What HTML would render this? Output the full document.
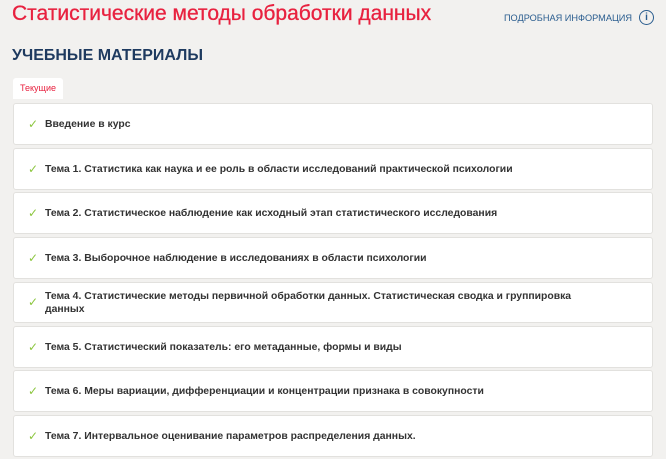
<!DOCTYPE html><html><head><meta charset="utf-8"><style>
body{margin:0;background:#f2f1ef;font-family:"Liberation Sans","DejaVu Sans",sans-serif;width:666px;height:459px;overflow:hidden;position:relative}
h1{position:absolute;left:12px;top:2px;margin:0;font-size:21px;font-weight:normal;color:#e8213f;-webkit-text-stroke:0.3px #e8213f}
.info{position:absolute;right:12px;top:10px;font-size:9.2px;color:#2a5d8f;display:flex;align-items:center;gap:7px}
.info span.i{width:13px;height:13px;border:1.6px solid #2a5d8f;border-radius:50%;display:inline-flex;align-items:center;justify-content:center;font-weight:bold;font-size:10px}
h2{position:absolute;left:12px;top:47px;margin:0;font-size:16px;font-weight:bold;color:#1e3a5f}
.tab{position:absolute;left:13px;top:78px;width:50px;height:21px;background:#fff;border-radius:3px 3px 0 0;font-size:9px;color:#e8213f;line-height:21px;text-align:center}
.card{position:absolute;left:13px;width:640px;background:#fff;border:1px solid #e2e1de;border-radius:3px;box-sizing:border-box;display:flex;align-items:center;font-size:10.4px;font-weight:bold;color:#333;line-height:13px}
.card .c{width:17px;padding-left:14px;color:#8cc63f;font-size:12px;flex:none}
</style></head><body>
<h1>Статистические методы обработки данных</h1>
<div class="info">ПОДРОБНАЯ ИНФОРМАЦИЯ <span class="i">i</span></div>
<h2>УЧЕБНЫЕ МАТЕРИАЛЫ</h2>
<div class="tab">Текущие</div>
<div class="card" style="top:103px;height:42px"><span class="c">✓</span>Введение в курс</div>
<div class="card" style="top:148px;height:42px"><span class="c">✓</span>Тема 1. Статистика как наука и ее роль в области исследований практической психологии</div>
<div class="card" style="top:192px;height:42px"><span class="c">✓</span>Тема 2. Статистическое наблюдение как исходный этап статистического исследования</div>
<div class="card" style="top:237px;height:42px"><span class="c">✓</span>Тема 3. Выборочное наблюдение в исследованиях в области психологии</div>
<div class="card" style="top:282px;height:41px"><span class="c">✓</span>Тема 4. Статистические методы первичной обработки данных. Статистическая сводка и группировка<br>данных</div>
<div class="card" style="top:326px;height:42px"><span class="c">✓</span>Тема 5. Статистический показатель: его метаданные, формы и виды</div>
<div class="card" style="top:370px;height:42px"><span class="c">✓</span>Тема 6. Меры вариации, дифференциации и концентрации признака в совокупности</div>
<div class="card" style="top:415px;height:42px"><span class="c">✓</span>Тема 7. Интервальное оценивание параметров распределения данных.</div>
</body></html>
